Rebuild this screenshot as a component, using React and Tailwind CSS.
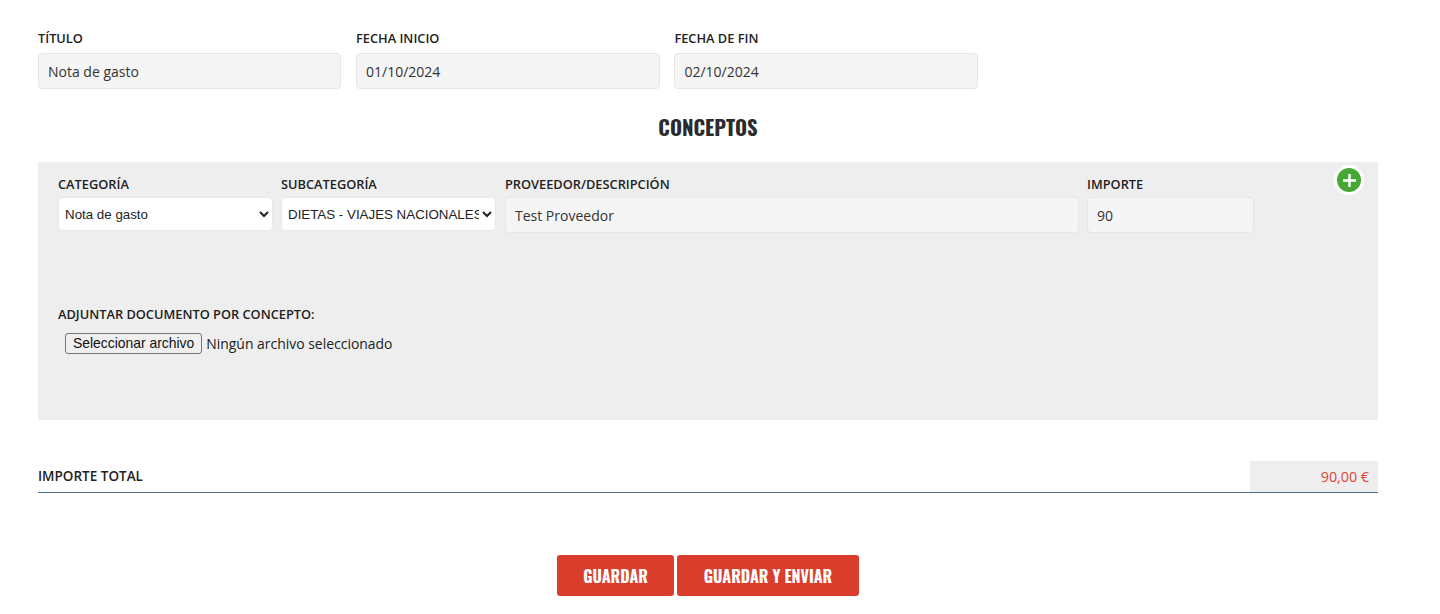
import React from "react";

const sans = "font-['Open_Sans',sans-serif]";
const label = `block text-[12.8px] leading-[16px] font-semibold text-[#222] uppercase ${sans}`;
const input = `block h-[36px] w-full rounded-[4px] border border-[#e6e6e6] bg-[#f5f5f5] px-[9px] text-[14px] text-[#333] outline-none ${sans}`;
const select = "block h-[34px] w-full rounded-[4px] border border-[#e8e8e8] bg-white pl-[2px] pr-0 text-[13.33px] text-[#222] font-['Liberation_Sans',sans-serif]";
const narrow = "font-['Oswald','Liberation_Sans_Narrow',sans-serif] font-bold";

function Field({ title, value, className }) {
  return (
    <div className={className}>
      <label className={`${label} mb-[7px]`}>{title}</label>
      <input readOnly value={value} className={input} />
    </div>
  );
}

export default function App() {
  return (
    <div className={`h-[614px] w-[1440px] overflow-hidden bg-white pt-[30px] pl-[38px] ${sans}`}>
      <div className="w-[1340px]">
        <div className="flex gap-[14.6px]">
          <Field title="Título" value="Nota de gasto" className="w-[303.4px]" />
          <Field title="Fecha inicio" value="01/10/2024" className="w-[303.8px]" />
          <Field title="Fecha de fin" value="02/10/2024" className="w-[303.6px]" />
        </div>

        <h2 className={`mt-[24px] text-center text-[20.6px] leading-[28px] text-[#2b2b2b] uppercase ${narrow}`}>Conceptos</h2>

        <section className="relative mt-[21px] h-[258px] bg-[#eeeeee] pt-[14px] pl-[20px]">
          <div className="flex gap-[8px]">
            <div className="w-[215px]">
              <label className={`${label} mb-[5px]`}>Categoría</label>
              <select className={select} defaultValue="Nota de gasto">
                <option>Nota de gasto</option>
              </select>
            </div>
            <div className="w-[215px]">
              <label className={`${label} mb-[5px]`}>Subcategoría</label>
              <select className={select} defaultValue="d">
                <option value="d">DIETAS - VIAJES NACIONALES</option>
              </select>
            </div>
            <div className="ml-px w-[574px]">
              <label className={`${label} mb-[5px]`}>Proveedor/Descripción</label>
              <input readOnly value="Test Proveedor" className={input} />
            </div>
            <div className="w-[167px]">
              <label className={`${label} mb-[5px]`}>Importe</label>
              <input readOnly value="90" className={input} />
            </div>
          </div>

          <button className="absolute top-[3px] right-[14px] flex h-[30px] w-[30px] items-center justify-center rounded-full border-[3px] border-white bg-[#45a834]">
            <svg width="15" height="15" viewBox="0 0 15 15" fill="none" stroke="white" strokeWidth="2.5">
              <path d="M7.5 1v13M1 7.5h13" />
            </svg>
          </button>

          <label className={`${label} mt-[73px]`}>Adjuntar documento por concepto:</label>
          <div className="mt-[11px] ml-[7px] flex items-center gap-[4px]">
            <button className="h-[21px] rounded-[3px] border border-[#767676] bg-[#efefef] px-[7px] text-[13.9px] leading-none text-[#111] font-['Liberation_Sans',sans-serif]">
              Seleccionar archivo
            </button>
            <span className="text-[13.95px] leading-[21px] text-[#222]">Ningún archivo seleccionado</span>
          </div>
        </section>

        <div className="mt-[41px] flex h-[32px] items-stretch justify-between border-b border-[#4a7391]">
          <span className="self-center text-[13.5px] font-semibold text-[#222] uppercase">Importe total</span>
          <span className="flex w-[128px] items-center justify-end bg-[#eeeeee] pr-[9px] text-[14.3px] text-[#e0463a]">90,00 €</span>
        </div>

        <div className="mt-[62px] flex justify-center gap-[3px]">
          <button className={`h-[41px] w-[117px] rounded-[3px] bg-[#d93e2d] text-[16px] text-white uppercase ${narrow}`}>Guardar</button>
          <button className={`h-[41px] w-[182px] rounded-[3px] bg-[#d93e2d] text-[16px] text-white uppercase ${narrow}`}>Guardar y enviar</button>
        </div>
      </div>
    </div>
  );
}
